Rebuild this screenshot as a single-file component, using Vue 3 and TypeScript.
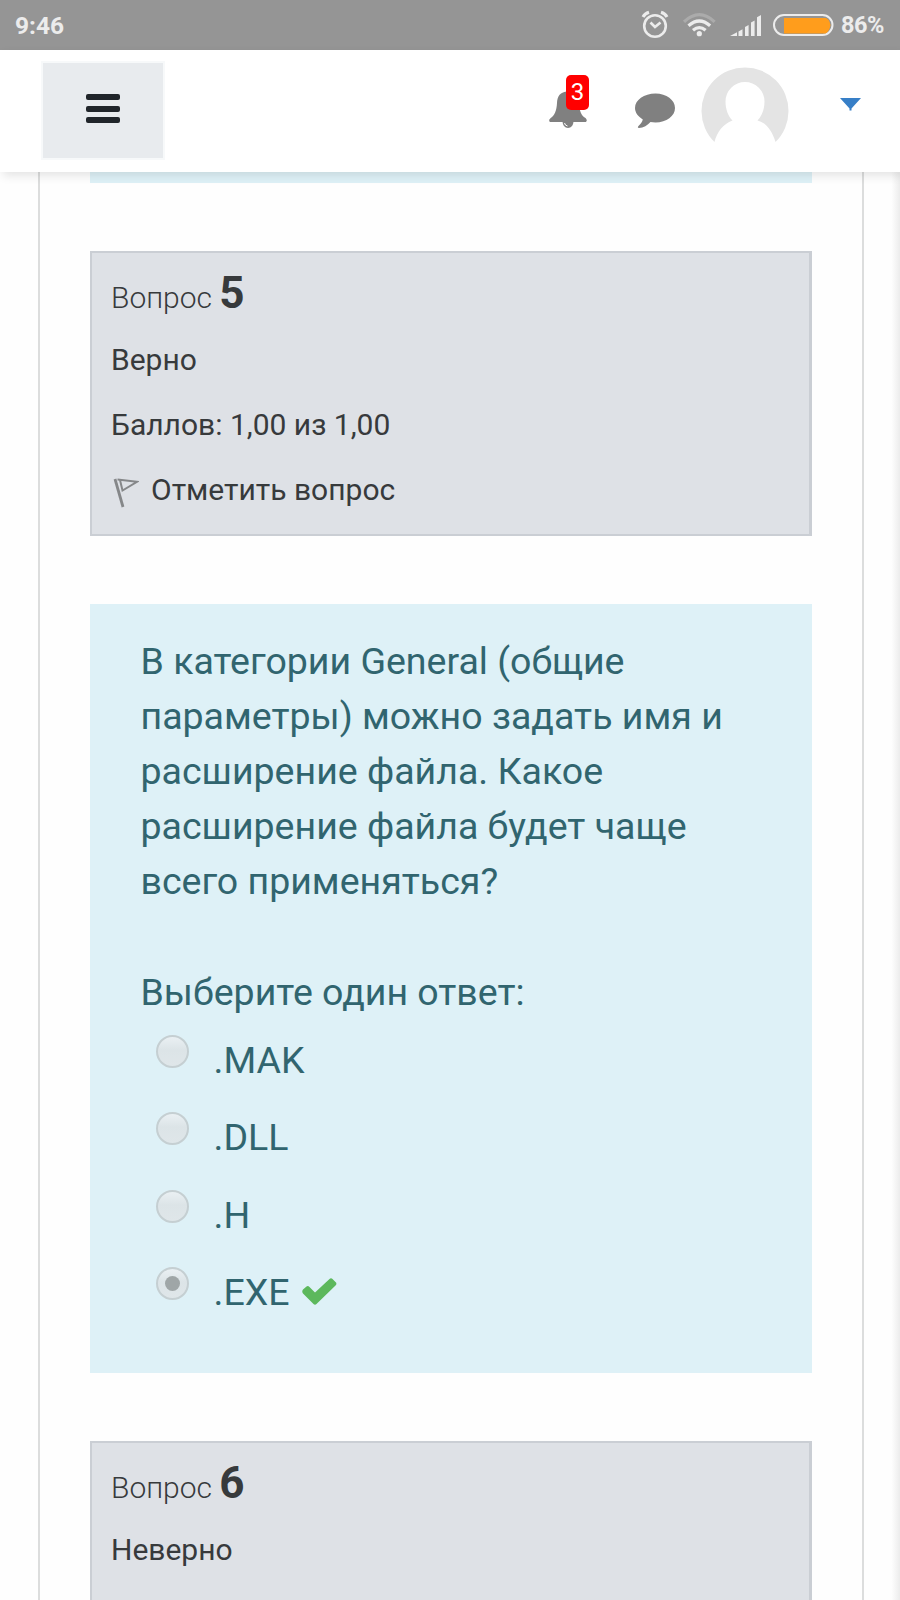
<script setup lang="ts">
interface Answer {
  label: string
  checked: boolean
}

const questionLines: string[] = [
  'В категории General (общие',
  'параметры) можно задать имя и',
  'расширение файла. Какое',
  'расширение файла будет чаще',
  'всего применяться?',
]

const answers: Answer[] = [
  { label: '.MAK', checked: false },
  { label: '.DLL', checked: false },
  { label: '.H', checked: false },
  { label: '.EXE', checked: true },
]
</script>

<template>
  <div class="screen">
    <div class="status">
      <span class="clock">9:46</span>
      <svg class="status-icons" width="196" height="32" viewBox="0 0 196 32">
        <g fill="none" stroke="#ececec" stroke-width="2.600">
          <circle cx="15" cy="17" r="10.800" />
          <path d="M10.500 13.500l4.500 4.500 5.500-4.500" />
          <path d="M3 8Q5 4.500 9 3.300M21 3.300q4 1.200 6 4.700" stroke-width="3.200" />
        </g>
        <g fill="none" stroke="#ececec" stroke-width="3.200">
          <path d="M44 12.800Q59.300-1.500 74.600 12.800" stroke="#ababab" />
          <path d="M48.500 16.800q10.800-9.600 21.600 0M53 21.300q6.300-5.400 12.600 0" />
        </g>
        <circle cx="59.300" cy="24.700" r="2.600" fill="#ececec" />
        <path fill="#ececec" d="M90 27l7-3.800V27zM98.500 22.400l4-2.200V27h-4zM105 18l3.600-2v11H105zM111 13.500l3.600-2V27H111zM117 8.300l4-2.300v21h-4z" />
        <rect x="134" y="6" width="58.500" height="20" rx="10" fill="none" stroke="#ececec" stroke-width="2" />
        <path fill="#ff9d1c" d="M144 9h41.500q4 1 5 7-1 6.500-5 8.500H144z" />
      </svg>
      <span class="percent">86%</span>
    </div>

    <header class="navbar">
      <button class="menu" type="button" aria-label="Меню">
        <span class="bar"></span>
        <span class="bar"></span>
        <span class="bar"></span>
      </button>
      <div class="tools">
        <div class="bell">
          <svg width="38" height="38" viewBox="0 0 38 38">
            <path fill="#808080" d="M19 1.500C11 1.500 8.300 6.500 8 13c-.4 8-2.500 12.500-6.300 15-2.500 2-1.500 4 .3 4h34c2 0 2.500-2 .5-4C32 25.500 30.500 21 30 13c-.4-7-3-11.500-11-11.500z" />
            <path fill="#808080" d="M13.500 31.500h11q-.5 6.500-5.500 6.500t-5.500-6.500z" />
            <path d="M15.500 33q.5 2.600 3 3" fill="none" stroke="#fff" stroke-width="1" />
          </svg>
          <span class="badge">3</span>
        </div>
        <svg class="chat" width="41" height="36" viewBox="0 0 41 36">
          <path fill="#808080" d="M20.500.5C31.500.5 40 7 40 15s-8.500 14.500-19.500 14.500q-2.800 0-5-.4C12.500 32.500 8.500 35 4 35c-1.300 0-1.500-1-.5-2 2-1.800 3.800-4 4.300-6.500C3.200 23.500 0 19.700 0 15 0 7 9 .5 20.500.5z" />
        </svg>
        <svg class="avatar" width="88" height="88" viewBox="0 0 88 88">
          <path fill="#e4e4e4" d="M13.500 75A43.500 43.500 0 1 1 74.500 75C71.500 65 66 56 56.500 53.500 61 49 63.500 42 63.500 34.500a19.500 19.500 0 0 0-39 0C24.500 42 27 49 31.500 53.500 22 57 16 65 13.500 75z" />
        </svg>
        <svg class="caret" width="21" height="13" viewBox="0 0 21 13">
          <path fill="#377fc7" d="M0 0h21L11.500 10.500v2h-2v-2z" />
        </svg>
      </div>
    </header>

    <main class="page">
      <div class="column">
        <div class="previous"></div>

        <section class="info">
          <h3 class="number">Вопрос <b>5</b></h3>
          <p class="line state">Верно</p>
          <p class="line grade">Баллов: 1,00 из 1,00</p>
          <p class="line flag">
            <svg width="26" height="30" viewBox="0 0 26 30">
              <g fill="none" stroke="#858789">
                <path d="M2 1l8 28" stroke-width="2.800" />
                <path d="M4.500 1.500L24 3.800 9.500 12.500 7 2" stroke-width="2" />
              </g>
            </svg>
            <span>Отметить вопрос</span>
          </p>
        </section>

        <section class="question">
          <p v-for="line in questionLines" :key="line" class="text">{{ line }}</p>
          <p class="prompt">Выберите один ответ:</p>
          <div v-for="answer in answers" :key="answer.label" class="answer">
            <span class="radio"><i v-if="answer.checked" class="dot"></i></span>
            <span class="label">{{ answer.label }}</span>
            <svg v-if="answer.checked" class="tick" width="35" height="28" viewBox="0 0 35 28">
              <path fill="#5cb85c" d="M1 11.500L4.500 8.500q1.500-1 3 .5l5.500 5.500L27.500 1q1.500-1.500 3 0l3.500 3.500q1 1.500-.5 3L14.500 26q-1.500 1.500-3 0L1 15.500q-1.500-2 0-4z" />
            </svg>
          </div>
        </section>

        <section class="info next">
          <h3 class="number">Вопрос <b>6</b></h3>
          <p class="line state">Неверно</p>
        </section>
      </div>
      <div class="edge"></div>
    </main>
  </div>
</template>

<style>
html,
body {
  margin: 0;
  overflow: hidden;
  background: #fff;
}
</style>

<style scoped>
.screen {
  display: flex;
  flex-direction: column;
  width: 900px;
  height: 1600px;
  overflow: hidden;
  background: #fefefe;
  font-family: Roboto, "Noto Sans", sans-serif;
}
.screen * {
  box-sizing: border-box;
}
.status {
  display: flex;
  flex: none;
  align-items: center;
  height: 50px;
  padding: 0 16px 0 15px;
  background: #959595;
  color: #ececec;
  font-size: 24.500px;
  font-weight: 700;
}
.status-icons {
  margin-left: auto;
}
.percent {
  width: 43px;
  margin-left: 5px;
  font-size: 23.500px;
  letter-spacing: -0.5px;
}
.navbar {
  position: relative;
  z-index: 1;
  display: flex;
  flex: none;
  justify-content: space-between;
  height: 122px;
  padding: 11px 41px 0 41px;
  background: #fff;
  box-shadow: 3px 4px 9px rgba(0, 0, 0, 0.1);
}
.menu {
  display: flex;
  flex-direction: column;
  align-items: center;
  gap: 5.500px;
  width: 124px;
  height: 99px;
  padding: 31px 0 0;
  border: 2px solid #f7f9fa;
  background: #e8ebee;
}
.bar {
  width: 34px;
  height: 6px;
  border-radius: 2px;
  background: #20252a;
}
.tools {
  display: flex;
  align-items: flex-start;
}
.bell {
  position: relative;
  margin-top: 29px;
}
.bell svg,
.chat,
.avatar,
.caret {
  display: block;
}
.badge {
  position: absolute;
  top: -15px;
  left: 17px;
  width: 23px;
  height: 35px;
  border-radius: 5px;
  background: #f00;
  color: #fff;
  font-size: 24px;
  line-height: 34px;
  text-align: center;
}
.chat {
  margin: 32px 0 0 48px;
}
.avatar {
  margin: 6px 0 0 25px;
}
.caret {
  margin: 37px -2px 0 51px;
}
.page {
  display: flex;
  flex: 1;
  min-height: 0;
}
.column {
  width: 826px;
  margin-left: 38px;
  padding: 0 50px;
  border: solid #dcdddd;
  border-width: 0 2px;
}
.edge {
  flex: 1;
  background: linear-gradient(to right, #fefefe 76%, #ececec);
}
.previous {
  height: 11px;
  background: #def1f7;
}
.info {
  height: 285px;
  margin-top: 68px;
  padding: 0 19px;
  border: 2px solid #caced4;
  border-right-width: 3px;
  background: #dee1e6;
  color: #373a3c;
}
.number {
  height: 83px;
  margin: 0;
  font-size: 30px;
  font-weight: 300;
  line-height: 81px;
}
.number b {
  font-size: 44px;
  font-weight: 700;
}
.line {
  display: flex;
  height: 65px;
  margin: 0;
  font-size: 30px;
  line-height: 44px;
}
.state {
  margin-top: 2px;
}
.flag svg {
  flex: none;
  margin: 10px 12px 0 2px;
}
.question {
  height: 769px;
  margin-top: 68px;
  padding: 30px 50.500px 0;
  background: #def1f7;
  color: #31656f;
  font-size: 37.500px;
}
.text,
.prompt {
  margin: 0;
  line-height: 55px;
  white-space: nowrap;
}
.prompt {
  margin: 56px 0 13px;
}
.answer {
  display: flex;
  height: 77.400px;
  line-height: 55px;
}
.radio {
  display: grid;
  place-items: center;
  width: 33px;
  height: 33px;
  margin: 2px 25px 0 15px;
  border: 2px solid #c5cfd2;
  border-radius: 50%;
  background: linear-gradient(#eaf0f3, #dce4e7 45%, #dfe6e9);
}
.dot {
  width: 15px;
  height: 15px;
  border-radius: 50%;
  background: #9fa6a7;
}
.tick {
  margin: 13px 0 0 12px;
}
.next {
  height: 400px;
}
</style>
